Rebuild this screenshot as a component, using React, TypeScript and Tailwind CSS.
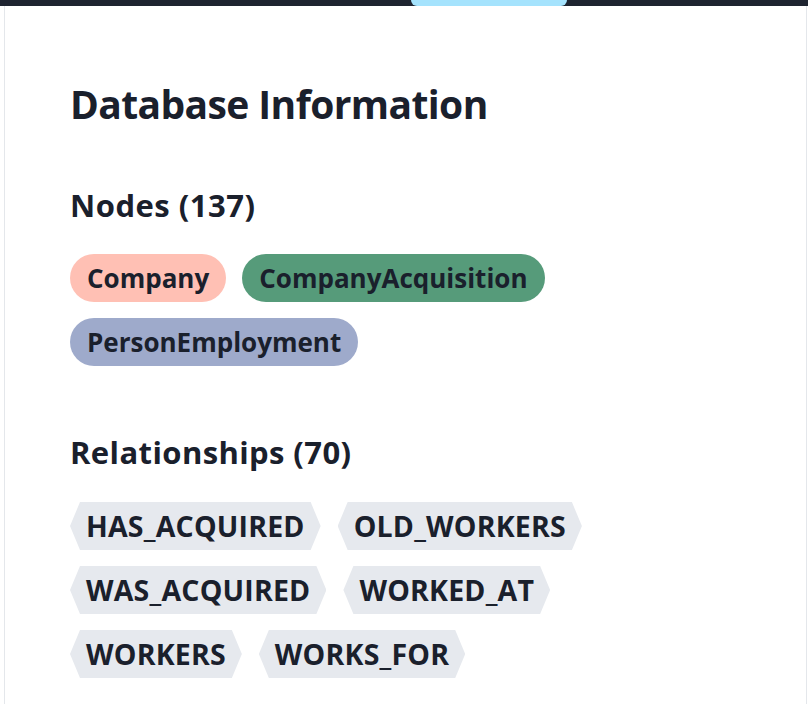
import React from 'react';

const nodes = [
  { label: 'Company', color: 'bg-[#ffc0b4]' },
  { label: 'CompanyAcquisition', color: 'bg-[#569b7a]' },
  { label: 'PersonEmployment', color: 'bg-[#9eaacb]' },
];

const relationships = ['HAS_ACQUIRED', 'OLD_WORKERS', 'WAS_ACQUIRED', 'WORKED_AT', 'WORKERS', 'WORKS_FOR'];

function NodePill({ label, color }: { label: string; color: string }) {
  return (
    <span className={`${color} inline-flex items-center h-[48px] px-[17px] rounded-full text-[26px] font-bold text-[#1a202c]`}>
      {label}
    </span>
  );
}

function RelTag({ label }: { label: string }) {
  return (
    <span className="inline-flex items-center h-[48px] px-[16px] bg-[#e6e9ee] text-[28.5px] tracking-[0.2px] font-bold text-[#1a202c] [clip-path:polygon(10px_0,calc(100%_-_10px)_0,100%_50%,calc(100%_-_10px)_100%,10px_100%,0_50%)]">
      {label}
    </span>
  );
}

export default function App() {
  return (
    <div className="w-[808px] h-[704px] bg-white overflow-hidden font-['Open_Sans',sans-serif] text-[#1a202c]">
      <div className="relative h-[6px] bg-[#1e2430]">
        <div className="absolute left-[411px] top-0 w-[156px] h-[6px] bg-[#a5e3fd] rounded-b-[6px]" />
      </div>
      <div className="ml-[4px] w-[803px] h-[698px] border-x border-[#e4e7eb] pl-[65px] pt-[74px]">
        <h1 className="text-[39px] leading-[48px] tracking-[-0.6px] font-bold">Database Information</h1>
        <h2 className="mt-[57px] text-[31px] leading-[40px] tracking-[0.5px] font-bold">Nodes (137)</h2>
        <div className="mt-[29px] flex flex-wrap gap-x-[16px] gap-y-[16px] max-w-[600px]">
          {nodes.map((n) => (
            <NodePill key={n.label} label={n.label} color={n.color} />
          ))}
        </div>
        <h2 className="mt-[66px] text-[31px] leading-[40px] tracking-[0.4px] font-bold">Relationships (70)</h2>
        <div className="mt-[30px] flex flex-wrap gap-x-[17px] gap-y-[16px] max-w-[620px]">
          {relationships.map((r) => (
            <RelTag key={r} label={r} />
          ))}
        </div>
      </div>
    </div>
  );
}
